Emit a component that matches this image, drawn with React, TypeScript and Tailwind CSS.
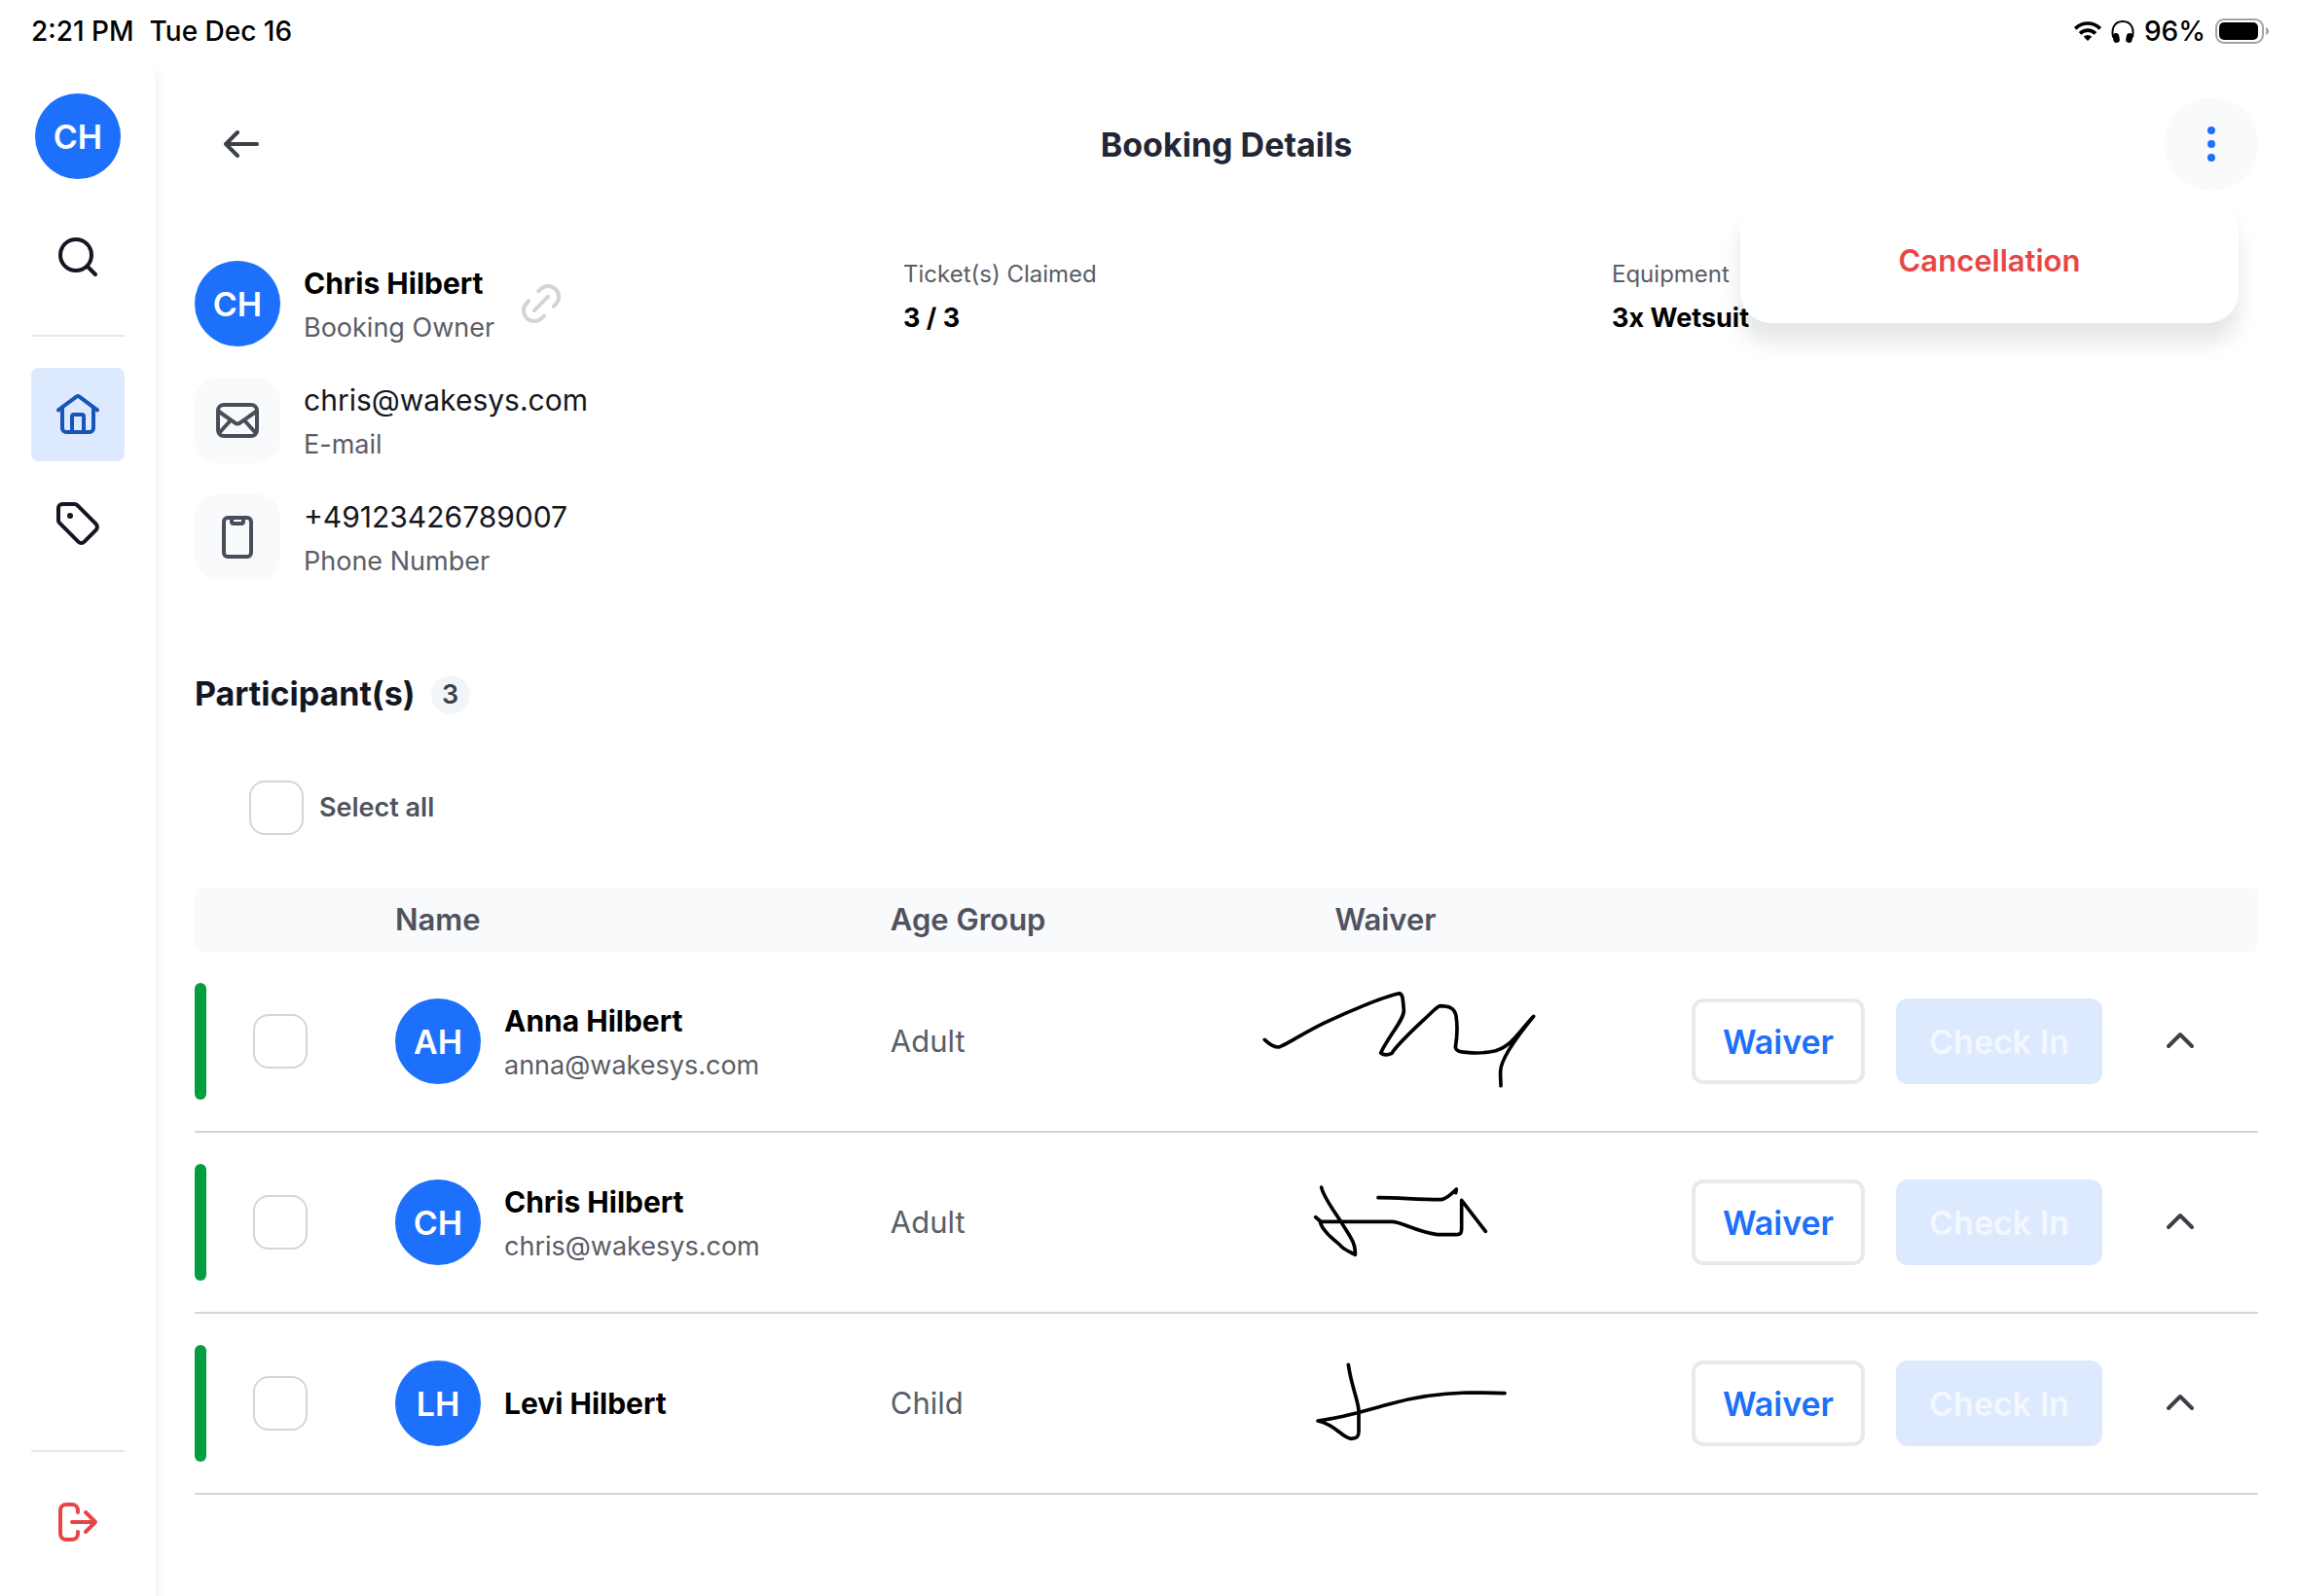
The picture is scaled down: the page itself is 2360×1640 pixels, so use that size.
import { useState } from 'react';
import type { ReactNode } from 'react';

type Participant = {
    id: string;
    initials: string;
    name: string;
    email?: string;
    ageGroup: string;
    signature: string;
};

const participants: Participant[] = [
    {
        id: 'anna',
        initials: 'AH',
        name: 'Anna Hilbert',
        email: 'anna@wakesys.com',
        ageGroup: 'Adult',
        signature:
            'M178 265C188 273 200 289 222 288C235 286 300 243 365 212C430 181 540 134 590 123C603 121 604 134 607 176C606 207 560 253 536 306C545 313 555 314 570 307C590 274 650 222 700 174C712 163 716 161 720 161C745 162 762 165 768 191C772 217 773 248 766 289C770 302 780 303 800 304C830 308 860 306 890 299C940 284 960 243 1007 193C975 232 905 320 905 362C904 377 906 393 906 407',
    },
    {
        id: 'chris',
        initials: 'CH',
        name: 'Chris Hilbert',
        email: 'chris@wakesys.com',
        ageGroup: 'Adult',
        signature:
            'M353 162C358 189 385 225 413 268C440 313 460 334 457 370C450 365 430 359 415 345C400 328 380 318 365 297C355 287 352 279 348 266L335 254L352 268H570C600 268 640 297 710 308H770C780 308 785 306 785 287V202L859 298M528 194C600 194 640 200 722 200C740 198 755 182 769 168L767 179',
    },
    {
        id: 'levi',
        initials: 'LH',
        name: 'Levi Hilbert',
        ageGroup: 'Child',
        signature:
            'M436 151C445 218 468 264 468 295V357C468 373 462 379 445 379C415 376 400 337 342 324C430 313 480 295 560 273C640 250 720 239 800 237C850 237 890 238 918 239',
    },
];

function Icon({ children }: { children: ReactNode }) {
    return (
        <svg
            className="size-12 shrink-0"
            viewBox="0 0 24 24"
            fill="none"
            stroke="currentColor"
            strokeWidth="2"
            strokeLinecap="round"
            strokeLinejoin="round"
            aria-hidden="true"
        >
            {children}
        </svg>
    );
}

function Avatar({ initials }: { initials: string }) {
    return (
        <div className="flex size-22 shrink-0 items-center justify-center rounded-full bg-[#1d70fb] text-[34px] font-semibold text-white">
            {initials}
        </div>
    );
}

const checkboxClass =
    'size-14 shrink-0 appearance-none rounded-2xl border-2 border-[#d6d6d8] bg-white checked:border-[#1d70fb] checked:bg-[#1d70fb]';

function StatusBar() {
    return (
        <div className="flex h-16 items-center justify-between pr-7 pl-8 text-[28px] font-medium text-black">
            <div className="flex gap-4">
                <span>2:21 PM</span>
                <span>Tue Dec 16</span>
            </div>
            <div className="flex items-center gap-2.5">
                <svg className="h-5 w-7" viewBox="0 0 28 20" aria-hidden="true">
                    <g fill="none" stroke="black" strokeWidth="3.6">
                        <path d="M1.2 7.4a18 18 0 0 1 25.6 0" />
                        <path d="M6 12.4a11.4 11.4 0 0 1 16 0" />
                    </g>
                    <path d="M14 20l-4.2-4.2a6 6 0 0 1 8.4 0z" />
                </svg>
                <svg className="h-6 w-6" viewBox="0 0 24 24" aria-hidden="true">
                    <path d="M2.2 18.5C.2 11 2.2 2 12 2s11.8 9 9.8 16.5" fill="none" stroke="black" strokeWidth="2" />
                    <rect x="2" y="14" width="6.5" height="10" rx="3" transform="rotate(-10 5 19)" />
                    <rect x="15.5" y="14" width="6.5" height="10" rx="3" transform="rotate(10 19 19)" />
                </svg>
                <span>96%</span>
                <svg className="h-[26px] w-14" viewBox="0 0 56 26" aria-hidden="true">
                    <rect x="1" y="1" width="48" height="24" rx="8" fill="none" stroke="#a3a3a3" strokeWidth="2" />
                    <rect x="4" y="4" width="40" height="18" rx="5" />
                    <path d="M52 9c4 1.5 4 6.5 0 8z" fill="#a3a3a3" />
                </svg>
            </div>
        </div>
    );
}

function Sidebar() {
    return (
        <nav className="flex w-40 shrink-0 flex-col items-center bg-white pt-8 pb-7 text-[#131722] shadow-[0_10px_12px_rgba(0,0,0,0.08)]">
            <Avatar initials="CH" />
            <button type="button" aria-label="Search" className="mt-8 flex size-24 items-center justify-center">
                <Icon>
                    <circle cx="11" cy="11" r="8" />
                    <path d="M17 17l4 4" />
                </Icon>
            </button>
            <div className="my-8 h-0.5 w-24 bg-[#e7e7e9]" />
            <button
                type="button"
                aria-label="Home"
                className="flex size-24 items-center justify-center rounded-lg bg-[#dde9fe] text-[#1755b8]"
            >
                <Icon>
                    <path d="M2 9.7L11.4 2.7a1 1 0 0 1 1.2 0L22 9.7" />
                    <path d="M4 8.5V19a2 2 0 0 0 2 2h12a2 2 0 0 0 2-2V8.5" />
                    <path d="M9 21v-8a1 1 0 0 1 1-1h4a1 1 0 0 1 1 1v8" />
                </Icon>
            </button>
            <button type="button" aria-label="Tickets" className="mt-4 flex size-24 items-center justify-center">
                <Icon>
                    <path d="M4 2h6.3a2 2 0 0 1 1.4.6l9.6 9.6a2.2 2.2 0 0 1 0 3.1l-6 6a2.2 2.2 0 0 1-3.1 0l-9.6-9.6A2 2 0 0 1 2 10.3V4a2 2 0 0 1 2-2z" />
                    <circle cx="8" cy="8" r="1.5" fill="currentColor" stroke="none" />
                </Icon>
            </button>
            <div className="mt-auto mb-6 h-0.5 w-24 bg-[#e7e7e9]" />
            <button
                type="button"
                aria-label="Log out"
                className="flex size-24 items-center justify-center text-[#e84646]"
            >
                <Icon>
                    <path d="M12 7V6a3 3 0 0 0-3-3H6a3 3 0 0 0-3 3v12a3 3 0 0 0 3 3h3a3 3 0 0 0 3-3v-1" />
                    <path d="M9 12h12M16 7l5 5-5 5" />
                </Icon>
            </button>
        </nav>
    );
}

function ContactRow({ icon, value, label }: { icon: ReactNode; value: string; label: string }) {
    return (
        <div className="flex gap-6">
            <div className="flex size-22 shrink-0 items-center justify-center rounded-3xl bg-[#f8fafb] text-[#4b4d5b]">
                <Icon>{icon}</Icon>
            </div>
            <div className="max-h-22 leading-[46px]">
                <p className="text-[30px] text-[#131722]">{value}</p>
                <p className="text-[27px] text-[#5b5d66]">{label}</p>
            </div>
        </div>
    );
}

function InfoItem({ label, value }: { label: string; value: string }) {
    return (
        <div className="flex flex-col gap-2">
            <p className="text-2xl leading-7 text-[#5b5d66]">{label}</p>
            <p className="text-[27px] leading-[46px] font-bold text-black">{value}</p>
        </div>
    );
}

export default function App() {
    const [selected, setSelected] = useState<string[]>([]);
    const [menuOpen, setMenuOpen] = useState(true);

    const allSelected = selected.length === participants.length;

    const toggle = (id: string) => {
        setSelected(selected.includes(id) ? selected.filter((s) => s !== id) : [...selected, id]);
    };

    return (
        <div className="flex min-h-screen flex-col bg-white font-['Inter',sans-serif]">
            <StatusBar />
            <div className="flex flex-1">
                <Sidebar />
                <main className="min-w-0 flex-1 px-10 pt-9">
                    {/* Header */}
                    <header className="relative flex items-center justify-between">
                        <button
                            type="button"
                            aria-label="Back"
                            className="flex size-24 items-center justify-center text-[#3c4049]"
                        >
                            <Icon>
                                <path d="M20 12H4M10 6l-6 6 6 6" />
                            </Icon>
                        </button>
                        <h1 className="text-[34px] font-bold text-[#232634]">Booking Details</h1>
                        <button
                            type="button"
                            aria-label="More options"
                            aria-expanded={menuOpen}
                            onClick={() => setMenuOpen(!menuOpen)}
                            className="flex size-24 items-center justify-center rounded-full bg-[#f8fafc] text-[#1d70fb]"
                        >
                            <svg className="size-12" viewBox="0 0 24 24" fill="currentColor" aria-hidden="true">
                                <circle cx="12" cy="5" r="2" />
                                <circle cx="12" cy="12" r="2" />
                                <circle cx="12" cy="19" r="2" />
                            </svg>
                        </button>
                        {menuOpen && (
                            <div className="absolute top-full right-5 mt-2 w-[512px] rounded-[32px] bg-white shadow-[0_20px_22px_rgba(0,0,0,0.1)]">
                                <button
                                    type="button"
                                    className="h-32 w-full text-[31px] font-semibold text-[#e84646]"
                                >
                                    Cancellation
                                </button>
                            </div>
                        )}
                    </header>

                    {/* Booking info */}
                    <section className="mt-18 grid grid-cols-3 gap-16">
                        <div className="flex flex-col gap-8">
                            <div className="flex gap-6">
                                <Avatar initials="CH" />
                                <div className="max-h-22 leading-[46px]">
                                    <p className="text-[30px] font-bold text-black">Chris Hilbert</p>
                                    <p className="text-[27px] text-[#5b5d66]">Booking Owner</p>
                                </div>
                                <button type="button" aria-label="Copy link" className="text-[#d2d4d6]">
                                    <Icon>
                                        <g transform="rotate(-45 12 12)">
                                            <path d="M15.5 6.5H17a5.5 5.5 0 0 1 0 11h-1.5" />
                                            <path d="M8.5 17.5H7a5.5 5.5 0 0 1 0-11h1.5" />
                                            <path d="M7 12h10" />
                                        </g>
                                    </Icon>
                                </button>
                            </div>
                            <ContactRow
                                value="chris@wakesys.com"
                                label="E-mail"
                                icon={
                                    <>
                                        <rect x="2" y="4" width="20" height="16" rx="3" />
                                        <path d="M2.5 7.5l8.3 5.8a2 2 0 0 0 2.4 0l8.3-5.8" />
                                        <path d="M8 12.5L3 18M16 12.5l5 5.5" />
                                    </>
                                }
                            />
                            <ContactRow
                                value="+49123426789007"
                                label="Phone Number"
                                icon={
                                    <>
                                        <rect x="5" y="2" width="14" height="20" rx="2" />
                                        <path d="M9 2v2a1 1 0 0 0 1 1h4a1 1 0 0 0 1-1V2" />
                                    </>
                                }
                            />
                        </div>
                        <InfoItem label="Ticket(s) Claimed" value="3 / 3" />
                        <InfoItem label="Equipment" value="3x Wetsuit" />
                    </section>

                    {/* Participants */}
                    <section className="mt-24">
                        <div className="flex h-11 items-center gap-4">
                            <h2 className="pb-1 text-[34px] font-bold text-[#131722]">Participant(s)</h2>
                            <span className="flex size-10 items-center justify-center rounded-full bg-[#f3f6f8] text-[27px] font-semibold text-[#3c4049]">
                                {participants.length}
                            </span>
                        </div>

                        <label className="mt-[66px] flex w-fit items-center gap-4 pl-14 text-[27px] font-semibold text-[#50525e]">
                            <input
                                type="checkbox"
                                className={checkboxClass}
                                checked={allSelected}
                                onChange={() => setSelected(allSelected ? [] : participants.map((p) => p.id))}
                            />
                            Select all
                        </label>

                        <table className="mt-[54px] w-full table-fixed border-separate border-spacing-0">
                            <colgroup>
                                <col className="w-[206px]" />
                                <col className="w-[24%]" />
                                <col className="w-[17%]" />
                                <col className="w-[14%]" />
                                <col />
                            </colgroup>
                            <thead>
                                <tr className="h-[66px] text-[31px] text-[#50525e] *:bg-[#f8fafb] *:p-0 *:font-semibold">
                                    <th className="rounded-l-lg" />
                                    <th className="text-left">Name</th>
                                    <th className="text-left">Age Group</th>
                                    <th className="text-center">Waiver</th>
                                    <th className="rounded-r-lg" />
                                </tr>
                            </thead>
                            <tbody>
                                {participants.map((p) => (
                                    <tr key={p.id} className="*:border-b-2 *:border-[#d5d5d6] *:px-0 *:py-8">
                                        <td>
                                            <div className="flex items-center gap-12">
                                                <div className="h-30 w-3 rounded-full bg-[#019d3e]" />
                                                <input
                                                    type="checkbox"
                                                    aria-label={`Select ${p.name}`}
                                                    className={checkboxClass}
                                                    checked={selected.includes(p.id)}
                                                    onChange={() => toggle(p.id)}
                                                />
                                            </div>
                                        </td>
                                        <td>
                                            <div className="flex items-center gap-6">
                                                <Avatar initials={p.initials} />
                                                <div className="max-h-22 leading-[46px]">
                                                    <p className="text-[30px] font-bold text-black">{p.name}</p>
                                                    {p.email && <p className="text-[27px] text-[#5b5d66]">{p.email}</p>}
                                                </div>
                                            </div>
                                        </td>
                                        <td className="text-[31px] text-[#5b5d66]">{p.ageGroup}</td>
                                        <td>
                                            <svg
                                                className="h-30 w-[304px]"
                                                viewBox="105 90 912 360"
                                                fill="none"
                                                stroke="black"
                                                strokeWidth="11"
                                                strokeLinecap="round"
                                                strokeLinejoin="round"
                                                role="img"
                                                aria-label={`Signature of ${p.name}`}
                                            >
                                                <path d={p.signature} />
                                            </svg>
                                        </td>
                                        <td>
                                            <div className="flex items-center justify-end pr-14 text-[34px] font-semibold">
                                                <button
                                                    type="button"
                                                    className="h-22 w-[178px] rounded-xl border-4 border-[#e8e9e9] text-[#1d70fb]"
                                                >
                                                    Waiver
                                                </button>
                                                <button
                                                    type="button"
                                                    disabled
                                                    className="ml-8 h-22 w-[212px] rounded-xl bg-[#dde9fe] text-[#f3f7fe]"
                                                >
                                                    Check In
                                                </button>
                                                <button
                                                    type="button"
                                                    aria-label={`Collapse ${p.name}`}
                                                    className="ml-14 text-[#3c4049]"
                                                >
                                                    <Icon>
                                                        <path d="M6 14.5l6-6 6 6" />
                                                    </Icon>
                                                </button>
                                            </div>
                                        </td>
                                    </tr>
                                ))}
                            </tbody>
                        </table>
                    </section>
                </main>
            </div>
        </div>
    );
}
